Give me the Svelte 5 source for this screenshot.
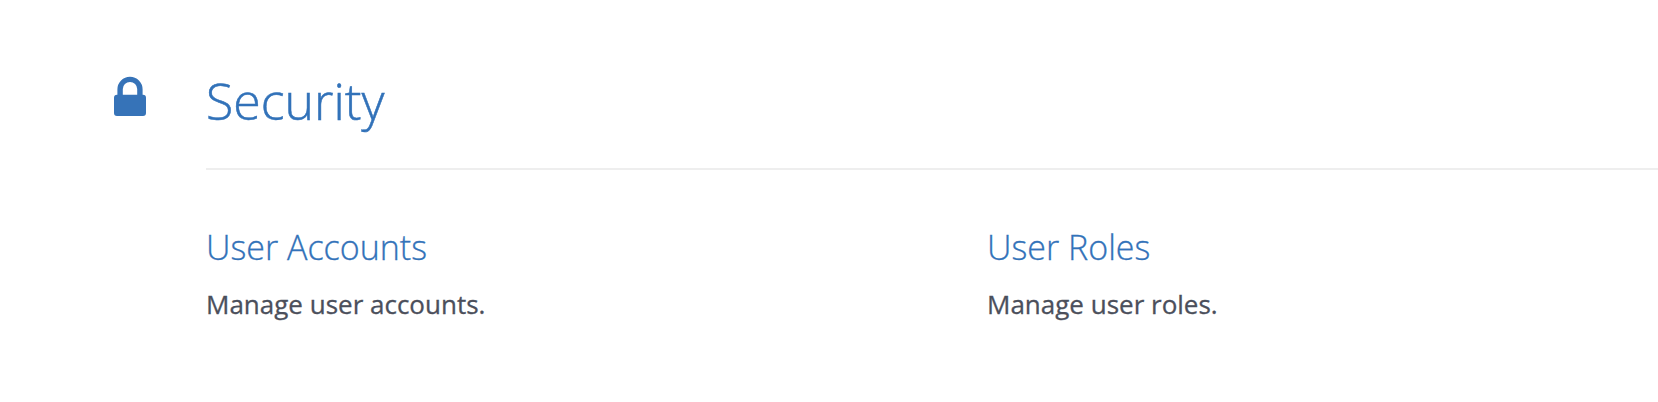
<script lang="ts">
  const section = {
    title: 'Security',
    links: [
      { name: 'User Accounts', description: 'Manage user accounts.' },
      { name: 'User Roles', description: 'Manage user roles.' },
    ],
  };
</script>

<section class="section">
  <svg class="icon" viewBox="0 0 32 40" aria-hidden="true">
    <path
      fill-rule="evenodd"
      d="M3 18.7h.4V13.3a12.6 12.6 0 0 1 25.2 0v5.4h.4a3 3 0 0 1 3 3V37a3 3 0 0 1-3 3H3a3 3 0 0 1-3-3V21.7a3 3 0 0 1 3-3ZM8.8 18.7h14.4v-5.6a7.2 7.2 0 0 0-14.4 0Z"
    />
  </svg>

  <div class="content">
    <h2>{section.title}</h2>

    <ul class="links">
      {#each section.links as link (link.name)}
        <li>
          <h3>{link.name}</h3>
          <p>{link.description}</p>
        </li>
      {/each}
    </ul>
  </div>
</section>

<style>
  :global(body) {
    margin: 0;
    background: #fff;
  }

  .section {
    display: flex;
    box-sizing: border-box;
    height: 402px;
    padding: 76px 0 0 114px;
    overflow: hidden;
    font-family: 'Open Sans', sans-serif;
    color: #4b4f5b;
  }

  .icon {
    flex: none;
    width: 32px;
    height: 40px;
    margin-right: 60px;
    fill: #3673b8;
  }

  .content {
    flex: 1;
  }

  h2,
  h3 {
    margin: 0;
    font-weight: 300;
    color: #3272b9;
  }

  h2 {
    height: 92px;
    border-bottom: 2px solid #eee;
    font-size: 50px;
    line-height: 50px;
    -webkit-text-stroke: 0.5px;
  }

  .links {
    display: grid;
    grid-template-columns: 781px 1fr;
    margin: 0;
    padding: 56px 0 0;
    list-style: none;
  }

  h3 {
    font-size: 34px;
    line-height: 42px;
    -webkit-text-stroke: 0.3px;
  }

  p {
    margin: 16px 0 0;
    font-size: 26px;
    line-height: 40px;
    -webkit-text-stroke: 0.3px;
  }
</style>
